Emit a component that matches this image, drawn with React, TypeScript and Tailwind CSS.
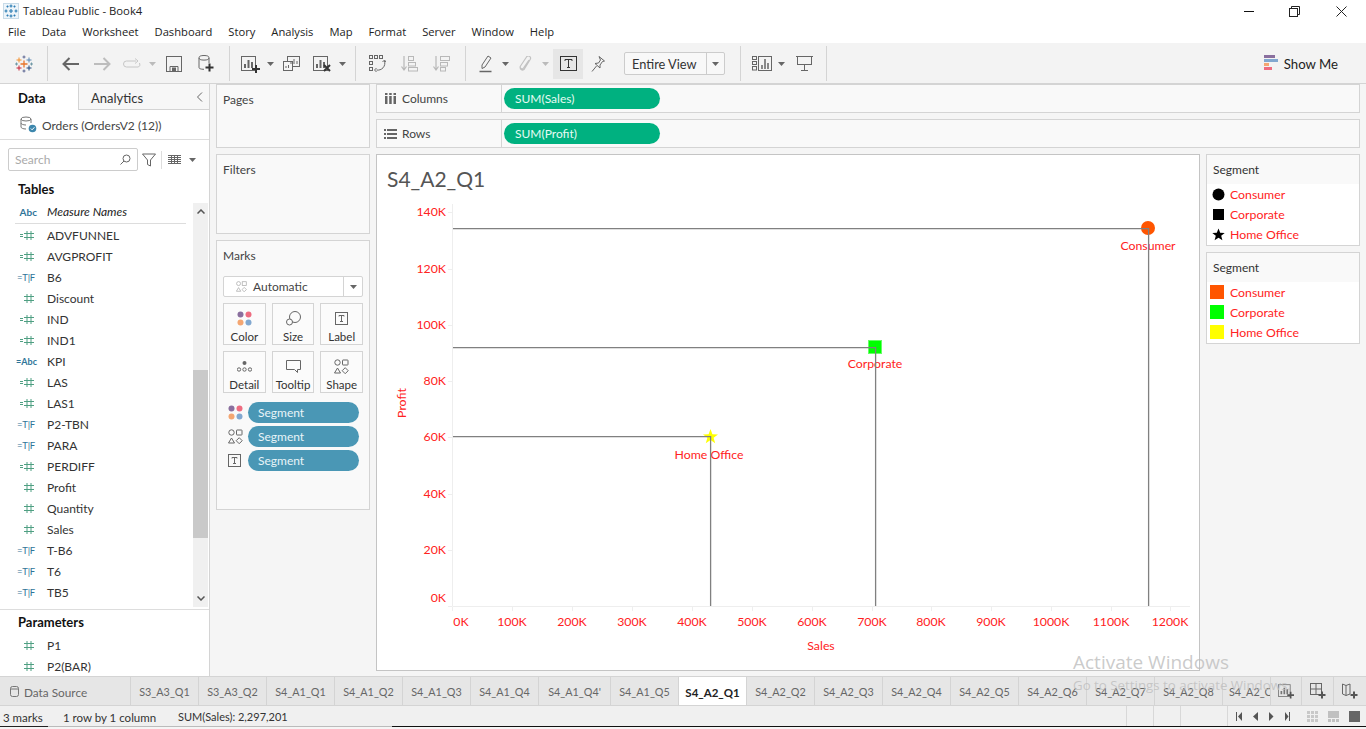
import React from 'react';

const Caret = ({ light = false }: { light?: boolean }) => (
  <svg width="7" height="4" viewBox="0 0 7 4"><path d="M0 0h7L3.500 4z" fill={light ? '#bbbbbb' : '#666666'} /></svg>
);

const Slot = ({ className, children }: { className: string; children?: React.ReactNode }) => (
  <div className={`flex items-center justify-center h-full shrink-0 ${className}`}>{children}</div>
);

const Divider = ({ className = '' }: { className?: string }) => <div className={`w-px h-[35px] bg-[#d4d4d4] shrink-0 ${className}`} />;

const Plus = ({ x, y, s = 4, w = 2, c = '#333333' }: { x: number; y: number; s?: number; w?: number; c?: string }) => (
  <path d={`M${x - s} ${y}h${2 * s}M${x} ${y - s}v${2 * s}`} stroke={c} strokeWidth={w} fill="none" />
);

const TableauLogo = ({ size = 18 }: { size?: number }) => (
  <svg width={size} height={size} viewBox="0 0 18 18">
    <Plus x={9} y={9} s={3.500} w={1.3} c="#e8762b" />
    <Plus x={4} y={5} s={2.500} w={1} c="#f28e2b" />
    <Plus x={14} y={5} s={2.500} w={1} c="#5b87b2" />
    <Plus x={4} y={13} s={2.500} w={1} c="#c72035" />
    <Plus x={14} y={13} s={2.500} w={1} c="#1f447a" />
    <Plus x={9} y={2} s={1.500} w={1} c="#5b6591" />
    <Plus x={9} y={16} s={1.500} w={1} c="#5b6591" />
    <Plus x={1.500} y={9} s={1.500} w={1} c="#7099a6" />
    <Plus x={16.500} y={9} s={1.500} w={1} c="#7099a6" />
  </svg>
);

const AppIcon = () => (
  <svg width="16" height="16" viewBox="0 0 16 16">
    <rect x="0.500" y="0.500" width="15" height="15" fill="#eef5fa" stroke="#c8dbe8" />
    <g stroke="#2f7fb5" strokeWidth="1.200" fill="none">
      <path d="M8 1.500v3M6.500 3h3M8 11.500v3M6.500 13h3M1.500 8h3M3 6.500v3M11.500 8h3M13 6.500v3M6 8h4M8 6v4M3.500 3.500h2M4.500 2.500v2M10.500 3.500h2M11.500 2.500v2M3.500 12.500h2M4.500 11.500v2M10.500 12.500h2M11.500 11.500v2" />
    </g>
  </svg>
);

const HashIcon = ({ c = '#4f9f82' }: { c?: string }) => (
  <svg width="10" height="9" viewBox="0 0 10 9"><path d="M0 2.500h10M0 6.500h10M3 0v9M7 0v9" stroke={c} strokeWidth="1" fill="none" /></svg>
);

const FieldIcon = ({ t }: { t: string }) => {
  if (t === 'n') return <div className="w-[37px] flex justify-end pr-[3px]"><HashIcon /></div>;
  if (t === 'cn')
    return (
      <div className="w-[37px] flex justify-end items-center gap-[1px] pr-[3px]">
        <span className="block w-[3px] h-[3px] border-y border-[#4f9f82]" />
        <HashIcon />
      </div>
    );
  if (t === 'tf')
    return <div className="w-[37px] flex justify-end text-[9.500px] leading-none text-[#2f7599] whitespace-nowrap pr-[2px] -tracking-[0.2px]">=T|F</div>;
  if (t === 'cabc')
    return <div className="w-[37px] flex justify-end text-[9px] leading-none text-[#2f7599] whitespace-nowrap font-bold">=Abc</div>;
  return <div className="w-[37px] flex justify-end text-[10px] leading-none text-[#2f7599] whitespace-nowrap font-bold">Abc</div>;
};

const Field = ({ t, name }: { t: string; name: string }) => (
  <div className="h-[21px] flex items-center shrink-0">
    <div className="w-[37px] shrink-0">
      <FieldIcon t={t} />
    </div>
    <span className="ml-[10px] text-[12px] text-[#333333] whitespace-nowrap">{name}</span>
  </div>
);

const fields: [string, string][] = [
  ['cn', 'ADVFUNNEL'], ['cn', 'AVGPROFIT'], ['tf', 'B6'], ['n', 'Discount'], ['cn', 'IND'], ['cn', 'IND1'],
  ['cabc', 'KPI'], ['cn', 'LAS'], ['cn', 'LAS1'], ['tf', 'P2-TBN'], ['tf', 'PARA'], ['cn', 'PERDIFF'],
  ['n', 'Profit'], ['n', 'Quantity'], ['n', 'Sales'], ['tf', 'T-B6'], ['tf', 'T6'], ['tf', 'TB5'],
];

const menus = ['File', 'Data', 'Worksheet', 'Dashboard', 'Story', 'Analysis', 'Map', 'Format', 'Server', 'Window', 'Help'];

const Dots = () => (
  <svg width="15" height="15" viewBox="0 0 15 15">
    <circle cx="3.500" cy="3.500" r="3" fill="#8a6f9e" /><circle cx="11.500" cy="3.500" r="3" fill="#ee6c80" />
    <circle cx="3.500" cy="11.500" r="3" fill="#f4a672" /><circle cx="11.500" cy="11.500" r="3" fill="#82a8d0" />
  </svg>
);
const Shapes = ({ c = '#666666' }: { c?: string }) => (
  <svg width="15" height="15" viewBox="0 0 15 15" fill="none" stroke={c}>
    <circle cx="3.500" cy="3.500" r="2.700" /><rect x="8.500" y="1" width="5.500" height="5" rx="0.500" />
    <path d="M3.500 9l3 5H0.500z" /><path d="M11.200 8.700l3 3-3 3-3-3z" />
  </svg>
);
const TBox = ({ s = 13 }: { s?: number }) => (
  <svg width={s} height={s} viewBox="0 0 13 13" fill="none" stroke="#666666">
    <rect x="0.500" y="0.500" width="12" height="12" />
    <path d="M4 4.500V3.500h5v1M6.500 3.500v6M5 9.500h3" />
  </svg>
);

const MarkBtn = ({ label, icon }: { label: string; icon: React.ReactNode }) => (
  <div className="w-[43px] h-[42px] border border-[#d4d4d4] bg-[#fbfbfb] flex flex-col items-center">
    <div className="h-[26px] flex items-center justify-center pt-[2px]">{icon}</div>
    <span className="text-[11.500px] leading-[14px] text-[#333333] whitespace-nowrap">{label}</span>
  </div>
);

const Pill = ({ icon }: { icon: React.ReactNode }) => (
  <div className="flex items-center h-[21px]">
    <div className="w-[26px] pl-[6px] flex items-center">{icon}</div>
    <div className="w-[111px] h-[21px] rounded-[11px] bg-[#4a97b5] text-[#e8f4f8] text-[12px] leading-[21px] pl-[10px]">Segment</div>
  </div>
);

const Card = ({ title, className, children }: { title: string; className: string; children?: React.ReactNode }) => (
  <div className={`border border-[#d4d4d4] bg-[#f9f9f9] shrink-0 px-[6px] ${className}`}>
    <div className="text-[12px] leading-[14px] pt-[8px] text-[#444444]">{title}</div>
    {children}
  </div>
);

const Shelf = ({ title, pill, icon }: { title: string; pill: string; icon: React.ReactNode }) => (
  <div className="h-[29px] border border-[#d4d4d4] bg-[#f9f9f9] flex items-center shrink-0">
    <div className="w-[125px] h-full flex items-center border-r border-[#d4d4d4]">
      <div className="w-[25px] flex justify-center pl-[2px]">{icon}</div>
      <span className="text-[12px] text-[#444444]">{title}</span>
    </div>
    <div className="ml-[2px] w-[156px] h-[21px] rounded-[11px] bg-[#00b180] text-[#e6fbf3] text-[12px] leading-[21px] pl-[11px]">{pill}</div>
  </div>
);

const Legend = ({ items }: { items: [React.ReactNode, string][] }) => (
  <div className="h-[92px] border border-[#d4d4d4] bg-white shrink-0">
    <div className="h-[29px] bg-[#f9f9f9] text-[12px] leading-[29px] pl-[6px] text-[#333333]">Segment</div>
    {items.map(([ic, l]) => (
      <div key={l} className="h-[20px] flex items-center">
        <div className="w-[23px] flex justify-center shrink-0">{ic}</div>
        <span className="text-[12.300px] pt-[2px] text-[#ff2222] whitespace-nowrap">{l}</span>
      </div>
    ))}
  </div>
);

const RED = '#ff2222';
const yt: [string, number, number][] = [
  ['140K', 212, 212], ['120K', 269, 269], ['100K', 325, 325], ['80K', 381, 381], ['60K', 437, 437], ['40K', 494, 494], ['20K', 550, 550], ['0K', 606, 598],
];
const xt: [string, number, number][] = [
  ['0K', 461, 452], ['100K', 512, 512], ['200K', 572, 572], ['300K', 632, 632], ['400K', 692, 692], ['500K', 752, 752], ['600K', 812, 812], ['700K', 872, 872], ['800K', 931, 931], ['900K', 991, 991], ['1000K', 1051, 1051], ['1100K', 1111, 1111], ['1200K', 1170, 1170],
];

const Chart = () => (
  <svg width="822" height="515" viewBox="377 155 822 515" className="block">
    <text x="387" y="187" fontSize="21" fill="#555555">S4_A2_Q1</text>
    <path d="M452.500 204v402.500H1190" stroke="#eeeeee" fill="none" />
    {yt.map(([l, y, ty]) => (
      <g key={l}>
        <path d={`M448 ${y + 0.5}h4`} stroke="#eeeeee" />
        <text x="446" y={ty + 4} fontSize="12.300" fill={RED} textAnchor="end">{l}</text>
      </g>
    ))}
    {xt.map(([l, x, tick]) => (
      <g key={l}>
        <path d={`M${tick + 0.5} 607v4`} stroke="#eeeeee" />
        <text x={x} y="626" fontSize="12.300" fill={RED} textAnchor="middle">{l}</text>
      </g>
    ))}
    <text x="0" y="0" fontSize="12.300" fill={RED} textAnchor="middle" transform="translate(406 403) rotate(-90)">Profit</text>
    <text x="821" y="650" fontSize="12.300" fill={RED} textAnchor="middle">Sales</text>
    <circle cx="1148" cy="228" r="7" fill="#ff5500" />
    <rect x="868.500" y="340.500" width="13" height="13" fill="#00ff00" stroke="#66ff66" strokeWidth="1" />
    <path d="M710.500 429l1.900 5.200 5.600 0.200-4.400 3.400 1.600 5.400-4.700-3.100-4.700 3.100 1.600-5.400-4.400-3.400 5.600-0.200z" fill="#ffff00" />
    <text x="1148" y="250" fontSize="12.300" fill={RED} textAnchor="middle">Consumer</text>
    <text x="875" y="368" fontSize="12.300" fill={RED} textAnchor="middle">Corporate</text>
    <text x="709" y="459" fontSize="12.300" fill={RED} textAnchor="middle">Home Office</text>
    <g stroke="#808080" strokeWidth="1.300" fill="none">
      <path d="M453 228.600H1148.600V606" />
      <path d="M453 347.600H875.600V606" />
      <path d="M453 436.600H710.600V606" />
    </g>
  </svg>
);

const sheets: [string, string][] = [
  ['S3_A3_Q1', 'w-[68px]'], ['S3_A3_Q2', 'w-[68px]'], ['S4_A1_Q1', 'w-[68px]'], ['S4_A1_Q2', 'w-[68px]'], ['S4_A1_Q3', 'w-[68px]'], ['S4_A1_Q4', 'w-[68px]'], ["S4_A1_Q4'", 'w-[72px]'], ['S4_A1_Q5', 'w-[68px]'],
  ['S4_A2_Q1', 'w-[68px]'], ['S4_A2_Q2', 'w-[68px]'], ['S4_A2_Q3', 'w-[68px]'], ['S4_A2_Q4', 'w-[68px]'], ['S4_A2_Q5', 'w-[68px]'], ['S4_A2_Q6', 'w-[68px]'], ['S4_A2_Q7', 'w-[68px]'], ['S4_A2_Q8', 'w-[68px]'],
];

const Bars = ({ c = '#666666' }: { c?: string }) => (
  <g stroke={c} fill="none">
    <rect x="0.500" y="1.500" width="14" height="14" />
    <path d="M4 13V9M7.500 13V5M11 13V7" strokeWidth="2" />
  </g>
);

export default function App() {
  return (
    <div className="relative w-[1366px] h-[729px] overflow-hidden flex flex-col bg-[#f5f5f5] font-['Lato','Open_Sans',sans-serif] text-[#333333]">
      <div className="h-[22px] bg-white flex items-center shrink-0 relative">
        <div className="ml-[3px] mr-[4px]"><AppIcon /></div>
        <span className="text-[11.300px] font-['Open_Sans',sans-serif] text-[#222222]">Tableau Public - Book4</span>
        <div className="ml-auto flex items-center h-full">
          <svg width="12" height="12" viewBox="0 0 12 12" className="mr-[34px]"><path d="M1 6.500h10" stroke="#111111" /></svg>
          <svg width="11" height="11" viewBox="0 0 11 11" fill="none" stroke="#222222" className="mr-[36px]"><rect x="0.500" y="2.500" width="8" height="8" /><path d="M2.500 2.500V0.500h8v8h-2" /></svg>
          <svg width="11" height="11" viewBox="0 0 11 11" stroke="#222222" className="mr-[19px]"><path d="M0.500 0.500l10 10M10.500 0.500l-10 10" /></svg>
        </div>
      </div>
      <div className="h-[21px] bg-white flex items-center shrink-0 pl-[8px] gap-[16px] text-[11.200px] font-['Open_Sans',sans-serif] text-[#222222]">
        {menus.map((m) => <span key={m}>{m}</span>)}
      </div>
      <div className="h-[41px] bg-[#f3f3f3] flex items-center shrink-0">
        <Slot className="w-[47px]"><TableauLogo /></Slot>
        <Divider />
        <Slot className="w-[6px]" />
        <Slot className="w-[32px]"><svg width="17" height="14" viewBox="0 0 17 14" fill="none" stroke="#666666" strokeWidth="2"><path d="M17 7H2M7.500 1L1.500 7l6 6" /></svg></Slot>
        <Slot className="w-[32px]"><svg width="17" height="14" viewBox="0 0 17 14" fill="none" stroke="#bdbdbd" strokeWidth="2"><path d="M0 7h15M9.500 1l6 6-6 6" /></svg></Slot>
        <Slot className="w-[29px]"><svg width="19" height="12" viewBox="0 0 19 12" fill="none" stroke="#c6c6c6"><path d="M13 3H3.500a3 3 0 0 0 0 6h12a3 3 0 0 0 1-4" /><path d="M12 0.500l3 2.500-3 2.500" /></svg></Slot>
        <Slot className="w-[11px]"><Caret light /></Slot>
        <Slot className="w-[32px]"><svg width="16" height="16" viewBox="0 0 16 16" fill="none" stroke="#666666"><rect x="0.500" y="0.500" width="15" height="15" /><path d="M4 15.500v-5h8v5" /><rect x="6.500" y="12" width="3" height="3" fill="#666666" /></svg></Slot>
        <Slot className="w-[32px]"><svg width="16" height="17" viewBox="0 0 16 17" fill="none" stroke="#666666"><ellipse cx="6" cy="2.800" rx="5" ry="2.300" /><path d="M1 3v9.500c0 1 1.500 1.800 5 1.800M11 3v5" /><Plus x={11.500} y={12.500} s={4} w={2} /></svg></Slot>
        <Slot className="w-[7px]" />
        <Divider />
        <Slot className="w-[4px]" />
        <Slot className="w-[32px]"><svg width="19" height="18" viewBox="0 0 19 18" fill="none"><Bars /><Plus x={15} y={14} s={4} w={2} /></svg></Slot>
        <Slot className="w-[9px]"><Caret /></Slot>
        <Slot className="w-[33px]"><svg width="17" height="15" viewBox="0 0 17 15" fill="none" stroke="#666666"><rect x="4.500" y="0.500" width="12" height="10" fill="#f3f3f3" /><rect x="0.500" y="5.500" width="9" height="9" fill="#f3f3f3" /><path d="M8 8V6M11 8V3M14 8V5M3 12v-2M5.500 12V9" /></svg></Slot>
        <Slot className="w-[29px]"><svg width="19" height="18" viewBox="0 0 19 18" fill="none"><Bars /><path d="M11 10l6 6M17 10l-6 6" stroke="#333333" strokeWidth="2" /></svg></Slot>
        <Slot className="w-[10px]"><Caret /></Slot>
        <Slot className="w-[8px]" />
        <Divider />
        <Slot className="w-[5px]" />
        <Slot className="w-[32px]"><svg width="17" height="17" viewBox="0 0 17 17" fill="none" stroke="#666666"><rect x="0.500" y="0.500" width="3" height="3" /><rect x="5.500" y="0.500" width="3" height="3" /><rect x="10.500" y="0.500" width="3" height="3" /><rect x="0.500" y="6.500" width="3" height="3" /><rect x="0.500" y="12.500" width="3" height="3" /><path d="M15.500 6a7 7 0 0 1-8 9M7.500 13l-2 2 2 2M15.500 5l-2 2M15.500 5l1.500 2" /></svg></Slot>
        <Slot className="w-[32px]"><svg width="17" height="16" viewBox="0 0 17 16" fill="none" stroke="#b8b8b8"><path d="M3 0v13M0.500 10.500L3 14l2.500-3.500" strokeWidth="1.200" /><rect x="7.500" y="0.500" width="5" height="4" /><rect x="7.500" y="6.500" width="7" height="3.500" /><rect x="7.500" y="11.500" width="9" height="3.500" /></svg></Slot>
        <Slot className="w-[32px]"><svg width="17" height="16" viewBox="0 0 17 16" fill="none" stroke="#b8b8b8"><path d="M3 0v13M0.500 10.500L3 14l2.500-3.500" strokeWidth="1.200" /><rect x="7.500" y="0.500" width="9" height="4" /><rect x="7.500" y="6.500" width="7" height="3.500" /><rect x="7.500" y="11.500" width="5" height="3.500" /></svg></Slot>
        <Slot className="w-[8px]" />
        <Divider />
        <Slot className="w-[6px]" />
        <Slot className="w-[27px]"><svg width="13" height="18" viewBox="0 0 13 18" fill="none" stroke="#666666"><path d="M9 1l3 2-6 9-3 1.500L3 10z" /><path d="M0.500 16.500h12" strokeWidth="1.500" /></svg></Slot>
        <Slot className="w-[12px]"><Caret /></Slot>
        <Slot className="w-[28px]"><svg width="13" height="16" viewBox="0 0 13 16" fill="none" stroke="#c2c2c2" strokeWidth="1.200"><path d="M10 4L4.500 12a1.800 1.800 0 0 1-3-2l6-9a2.200 2.200 0 0 1 3.800 2.200L5 13.500a3 3 0 0 1-4-1" /></svg></Slot>
        <Slot className="w-[12px]"><Caret light /></Slot>
        <Slot className="w-[2px]" />
        <div className="w-[30px] h-[30px] bg-[#e6e6e6] flex items-center justify-center shrink-0">
          <svg width="17" height="15" viewBox="0 0 17 15" fill="none" stroke="#333333"><rect x="0.500" y="0.500" width="16" height="14" /><path d="M5 5V3.500h7V5M8.500 3.500v8M7 11.500h3" /></svg>
        </div>
        <Slot className="w-[29px]"><svg width="14" height="16" viewBox="0 0 14 16" fill="none" stroke="#666666"><path d="M8 0.500l5.500 4.500-2 0.500-2.500 3.500 0 3-5-4.500 3.500-0.500 2-3z" /><path d="M5.500 10L1 15.500" /></svg></Slot>
        <Slot className="w-[12px]" />
        <div className="w-[101px] h-[23px] border border-[#cccccc] rounded-[2px] bg-[#f8f8f8] flex items-center shrink-0">
          <span className="w-[82px] pl-[7px] text-[12.800px] text-[#333333] border-r border-[#cccccc] h-full leading-[22px]">Entire View</span>
          <div className="flex-1 flex justify-center"><Caret /></div>
        </div>
        <Slot className="w-[15px]" />
        <Divider />
        <Slot className="w-[6px]" />
        <Slot className="w-[29px]"><svg width="20" height="15" viewBox="0 0 20 15" fill="none" stroke="#666666"><rect x="0.500" y="0.500" width="4" height="3" /><rect x="0.500" y="5.500" width="4" height="3" /><rect x="0.500" y="10.500" width="4" height="3.500" /><rect x="6.500" y="0.500" width="13" height="14" /><path d="M10 13V9M13 13V3M16 13V7" strokeWidth="1.500" /></svg></Slot>
        <Slot className="w-[10px]"><Caret /></Slot>
        <Slot className="w-[36px]"><svg width="17" height="17" viewBox="0 0 17 17" fill="none" stroke="#666666"><path d="M0 1.500h17" /><rect x="1.500" y="1.500" width="14" height="8" /><path d="M8.500 9.500v6M5 15.500h7" /></svg></Slot>
        <Slot className="w-[4px]" />
        <Divider />
        <div className="ml-auto flex items-center mr-[28px]">
          <svg width="14" height="16" viewBox="0 0 14 16" className="mr-[6px]">
            <rect x="0" y="0" width="11" height="3" fill="#8a6f9e" />
            <rect x="0" y="4" width="14" height="3" fill="#82a8d0" />
            <rect x="0" y="8" width="5" height="3" fill="#f4a672" />
            <rect x="0" y="12" width="8" height="3" fill="#ee6c80" />
          </svg>
          <span className="text-[13.200px] text-[#222222] pt-[2px]">Show Me</span>
        </div>
      </div>

      <div className="h-[593px] flex shrink-0 border-t border-[#d4d4d4] -mt-px">
        <div className="w-[210px] bg-white border-r border-[#d4d4d4] flex flex-col shrink-0">
          <div className="h-[26px] flex shrink-0">
            <div className="w-[78px] text-[13px] font-bold leading-[28px] pl-[18px] text-[#111111]">Data</div>
            <div className="flex-1 bg-[#f7f7f7] border-l border-b border-[#d4d4d4] flex items-center justify-between pl-[12px] pr-[6px] text-[13px] text-[#333333]">
              <span className="pt-[4px]">Analytics</span>
              <svg width="7" height="10" viewBox="0 0 7 10" fill="none" stroke="#666666"><path d="M6 0.500L1.500 5 6 9.500" /></svg>
            </div>
          </div>
          <div className="h-[30px] border-b border-[#dddddd] flex items-center shrink-0 pl-[20px]">
            <svg width="17" height="17" viewBox="0 0 17 17" fill="none" stroke="#777777" className="mr-[5px]">
              <ellipse cx="6" cy="3" rx="5" ry="2" />
              <path d="M1 3v8c0 1 2 2 5 2M11 3v4M1 7c0 1 2 2 5 2" />
              <circle cx="12.500" cy="12.500" r="3.800" fill="#3d87ad" stroke="none" />
              <path d="M10.800 12.500l1.300 1.300 2.300-2.500" stroke="#ffffff" />
            </svg>
            <span className="text-[12px] text-[#444444] whitespace-nowrap pt-[2px]">Orders (OrdersV2 (12))</span>
          </div>
          <div className="h-[40px] flex items-center shrink-0 pl-[8px] pb-[1px]">
            <div className="w-[130px] h-[23px] border border-[#cccccc] rounded-[2px] flex items-center justify-between pl-[6px] pr-[6px]">
              <span className="text-[12px] text-[#aaaaaa]">Search</span>
              <svg width="11" height="11" viewBox="0 0 11 11" fill="none" stroke="#666666"><circle cx="6.500" cy="4.500" r="3.500" /><path d="M4 7l-3.500 3.500" /></svg>
            </div>
            <svg width="14" height="14" viewBox="0 0 14 14" fill="none" stroke="#666666" className="ml-[4px]"><path d="M0.500 1h13L8.500 7v6l-3-1.500V7z" /></svg>
            <div className="w-px h-[18px] bg-[#dddddd] ml-[5px]" />
            <svg width="13" height="9" viewBox="0 0 13 9" className="ml-[6px]"><path d="M0 0.500h13M0 2.500h13M0 4.500h13M0 6.500h13M0 8.500h13M3.500 0v9M6.500 0v9M9.500 0v9" stroke="#666666" strokeWidth="1" fill="none" /></svg>
            <div className="ml-[8px]"><Caret /></div>
          </div>
          <div className="h-[23px] shrink-0 text-[13px] font-bold leading-[18px] pl-[18px] text-[#111111]">Tables</div>
          <div className="h-[404px] flex shrink-0 relative">
            <div className="w-[193px] h-full overflow-hidden">
              <div className="h-[18px] flex items-center">
                <div className="w-[37px] shrink-0"><FieldIcon t="abc" /></div>
                <span className="ml-[10px] text-[12px] italic text-[#222222]">Measure Names</span>
              </div>
              <div className="h-px w-[171px] ml-[15px] mt-[2px] bg-[#dddddd]" />
              <div className="flex flex-col pt-[1px]">
                {fields.map(([t, n]) => <Field key={n} t={t} name={n} />)}
              </div>
            </div>
            <div className="w-[15px] h-full bg-[#f0f0f0] flex flex-col">
              <div className="h-[17px] flex items-center justify-center"><svg width="8" height="5" viewBox="0 0 8 5" fill="none" stroke="#555555" strokeWidth="1.500"><path d="M0.500 4.500L4 1l3.500 3.500" /></svg></div>
              <div className="h-[150px]" />
              <div className="h-[168px] bg-[#c9c9c9]" />
              <div className="flex-1" />
              <div className="h-[17px] flex items-center justify-center"><svg width="8" height="5" viewBox="0 0 8 5" fill="none" stroke="#555555" strokeWidth="1.500"><path d="M0.500 0.500L4 4l3.500-3.500" /></svg></div>
            </div>
          </div>
          <div className="h-[2px] shrink-0" />
          <div className="flex-1 border-t border-[#dddddd] overflow-hidden">
            <div className="h-[25px] text-[13px] font-bold leading-[24px] pl-[18px] text-[#111111]">Parameters</div>
            <Field t="n" name="P1" />
            <Field t="n" name="P2(BAR)" />
          </div>
        </div>

        <div className="w-[1156px] pl-[6px] pr-[6px] flex gap-[6px] shrink-0">
          <div className="w-[154px] flex flex-col gap-[6px] shrink-0">
            <Card title="Pages" className="h-[64px]" />
            <Card title="Filters" className="h-[80px]" />
            <Card title="Marks" className="h-[270px]">
              <div className="mt-[13px] h-[21px] border border-[#d4d4d4] bg-white rounded-[2px] flex items-center">
                <div className="w-[120px] h-full flex items-center border-r border-[#d4d4d4] pl-[12px]">
                  <svg width="11" height="11" viewBox="0 0 15 15" fill="none" stroke="#aaaaaa"><circle cx="3.500" cy="3.500" r="2.700" /><rect x="8.500" y="1" width="5.500" height="5" /><path d="M3.500 9l3 5H0.500z" /><path d="M11.200 8.700l3 3-3 3-3-3z" /></svg>
                  <span className="ml-[6px] text-[12px] text-[#444444]">Automatic</span>
                </div>
                <div className="flex-1 flex justify-center"><Caret /></div>
              </div>
              <div className="mt-[6px] flex gap-[6px] w-[140px]">
                <MarkBtn label="Color" icon={<Dots />} />
                <MarkBtn label="Size" icon={<svg width="15" height="15" viewBox="0 0 15 15" fill="none" stroke="#666666"><circle cx="9" cy="6" r="5.500" /><circle cx="3.500" cy="11" r="3" fill="#fbfbfb" /></svg>} />
                <MarkBtn label="Label" icon={<TBox />} />
              </div>
              <div className="mt-[6px] flex gap-[6px] w-[140px]">
                <MarkBtn label="Detail" icon={<svg width="15" height="11" viewBox="0 0 15 11" fill="none" stroke="#666666"><circle cx="7.500" cy="2" r="2" fill="#666666" stroke="none" /><circle cx="2" cy="8.500" r="1.700" /><circle cx="7.500" cy="8.500" r="1.700" /><circle cx="13" cy="8.500" r="1.700" /></svg>} />
                <MarkBtn label="Tooltip" icon={<svg width="15" height="13" viewBox="0 0 15 13" fill="none" stroke="#666666"><path d="M0.500 0.500h14v9h-3v3l-3-3h-8z" /></svg>} />
                <MarkBtn label="Shape" icon={<Shapes />} />
              </div>
              <div className="mt-[9px] flex flex-col gap-[3px] -ml-[1px] w-[142px]">
                <Pill icon={<Dots />} />
                <Pill icon={<Shapes />} />
                <Pill icon={<TBox />} />
              </div>
            </Card>
          </div>
          <div className="w-[984px] flex flex-col gap-[6px] shrink-0">
            <Shelf title="Columns" pill="SUM(Sales)" icon={<svg width="11" height="11" viewBox="0 0 11 11" fill="#666666"><rect x="0" y="3" width="2.500" height="8" /><rect x="4.200" y="3" width="2.500" height="8" /><rect x="8.500" y="3" width="2.500" height="8" /><rect x="0" y="0" width="2.500" height="2" /><rect x="4.200" y="0" width="2.500" height="2" /><rect x="8.500" y="0" width="2.500" height="2" /></svg>} />
            <Shelf title="Rows" pill="SUM(Profit)" icon={<svg width="13" height="10" viewBox="0 0 13 10" fill="#666666"><rect x="0" y="0" width="2" height="2" /><rect x="3" y="0" width="10" height="2" /><rect x="0" y="4" width="2" height="2" /><rect x="3" y="4" width="10" height="2" /><rect x="0" y="8" width="2" height="2" /><rect x="3" y="8" width="10" height="2" /></svg>} />
            <div className="flex gap-[6px]">
              <div className="w-[824px] h-[517px] border border-[#c4c4c4] bg-white shrink-0"><Chart /></div>
              <div className="w-[154px] flex flex-col gap-[6px] shrink-0">
                <Legend items={[
                  [<svg width="13" height="13" viewBox="0 0 13 13"><circle cx="6.500" cy="6.500" r="6" fill="#000000" /></svg>, 'Consumer'],
                  [<div className="w-[11px] h-[11px] bg-black" />, 'Corporate'],
                  [<svg width="13" height="13" viewBox="0 0 13 13"><path d="M6.500 0.500l1.700 4.200 4.500 0.200-3.500 2.900 1.200 4.400-3.900-2.500-3.900 2.500 1.200-4.400-3.500-2.900 4.500-0.200z" fill="#000000" /></svg>, 'Home Office'],
                ]} />
                <Legend items={[
                  [<div className="w-[14px] h-[14px] bg-[#ff5500] -ml-[3px]" />, 'Consumer'],
                  [<div className="w-[14px] h-[14px] bg-[#00ff00] -ml-[3px]" />, 'Corporate'],
                  [<div className="w-[14px] h-[14px] bg-[#ffff00] -ml-[3px]" />, 'Home Office'],
                ]} />
              </div>
            </div>
          </div>
        </div>
      </div>

      <div className="h-[30px] bg-[#e6e6e6] border-y border-[#d4d4d4] flex shrink-0 overflow-hidden">
        <div className="w-[131px] border-r border-[#d4d4d4] flex items-center pl-[10px] shrink-0 text-[#666666]">
          <svg width="9" height="11" viewBox="0 0 9 11" fill="none" stroke="#777777" className="mr-[5px]"><rect x="0.500" y="0.500" width="8" height="10" rx="2" /><path d="M0.500 3h8" /></svg>
          <span className="text-[11.800px] pt-[3px]">Data Source</span>
        </div>
        <div className="w-[1139px] flex overflow-hidden shrink-0">
          {sheets.map(([s, w]) => (
            <div key={s} className={`${w} shrink-0 border-r border-[#d4d4d4] flex items-center justify-center whitespace-nowrap pt-[3px] ${s === 'S4_A2_Q1' ? 'bg-white text-[#222222] font-bold text-[11.500px]' : 'text-[#666666] text-[10.800px]'}`}>{s}</div>
          ))}
          <div className="w-[47px] shrink-0 overflow-hidden flex items-center pl-[6px] pt-[3px] text-[10.800px] whitespace-nowrap text-[#666666]">S4_A2_Q9</div>
        </div>
        <div className="w-[96px] flex shrink-0 bg-[#e6e6e6]">
          <div className="w-[32px] border-x border-[#d4d4d4] flex items-center justify-center"><svg width="16" height="16" viewBox="0 0 19 18" fill="none"><Bars c="#777777" /><Plus x={15} y={14} s={4} w={2} c="#555555" /></svg></div>
          <div className="w-[32px] border-r border-[#d4d4d4] flex items-center justify-center"><svg width="16" height="16" viewBox="0 0 16 16" fill="none" stroke="#666666"><rect x="0.500" y="0.500" width="11" height="11" /><path d="M6 0.500v11M0.500 6h11" /><Plus x={12} y={12} s={3.500} w={2} c="#555555" /></svg></div>
          <div className="w-[32px] flex items-center justify-center"><svg width="16" height="16" viewBox="0 0 16 16" fill="none" stroke="#666666"><path d="M0.500 1l3.500 1.500L8 1v10l-4 1.500L0.500 11z" /><path d="M4 2.500v10" /><Plus x={12} y={12} s={3.500} w={2} c="#555555" /></svg></div>
        </div>
      </div>

      <div className="h-[20px] flex items-center shrink-0 bg-[#f0f0f0] text-[11.500px] text-[#333333] whitespace-nowrap">
        <span className="ml-[3px] w-[60px] pt-[3px]">3 marks</span>
        <span className="w-[115px] pt-[3px]">1 row by 1 column</span>
        <span className="text-[11px] pt-[3px]">SUM(Sales): 2,297,201</span>
        <div className="ml-auto flex h-full items-center">
          <div className="w-[27px] h-full border-l border-[#d8d8d8]" />
          <div className="w-[27px] h-full border-l border-[#d8d8d8]" />
          <div className="w-[47px] h-full border-l border-[#d8d8d8]" />
          <div className="w-[139px] h-full border-l border-[#d8d8d8] flex items-center pl-[8px]">
            <svg width="62" height="9" viewBox="0 0 62 9" fill="#555555">
              <path d="M0 0h1v9H0zM6 0v9L2 4.500z" />
              <path d="M22 0v9l-5-4.500z" />
              <path d="M33 0v9l4.500-4.500z" />
              <path d="M49 0v9l3.500-4.500zM53 0h1v9h-1z" />
            </svg>
            <svg width="11" height="11" viewBox="0 0 11 11" fill="#c8c8c8" className="ml-[9px]">
              <rect x="0" y="0" width="3" height="3" /><rect x="4" y="0" width="3" height="3" /><rect x="8" y="0" width="3" height="3" />
              <rect x="0" y="4" width="3" height="3" /><rect x="4" y="4" width="3" height="3" /><rect x="8" y="4" width="3" height="3" />
              <rect x="0" y="8" width="3" height="3" /><rect x="4" y="8" width="3" height="3" /><rect x="8" y="8" width="3" height="3" />
            </svg>
            <svg width="11" height="11" viewBox="0 0 11 11" fill="#c0c0c0" className="ml-[10px]"><rect x="0" y="0" width="11" height="7" /><rect x="0" y="8" width="3" height="3" /><rect x="4" y="8" width="3" height="3" /><rect x="8" y="8" width="3" height="3" /></svg>
            <div className="w-[11px] h-[11px] bg-[#666666] ml-[10px]" />
          </div>
        </div>
      </div>
      <div className="h-[1px] flex shrink-0">
        <div className="w-[48px] bg-[#222222]" />
        <div className="w-[344px] bg-[#bbbbbb]" />
        <div className="flex-1 bg-[#111111]" />
      </div>

      <div className="absolute left-[1073px] top-[650px] text-[19px] leading-[24px] text-[#bdbdbd]/80 font-['Open_Sans',sans-serif] whitespace-nowrap pointer-events-none">Activate Windows</div>
      <div className="absolute left-[1073px] top-[676px] text-[13.300px] leading-[18px] text-[#bdbdbd]/80 font-['Open_Sans',sans-serif] whitespace-nowrap pointer-events-none">Go to Settings to activate Windows.</div>
    </div>
  );
}
